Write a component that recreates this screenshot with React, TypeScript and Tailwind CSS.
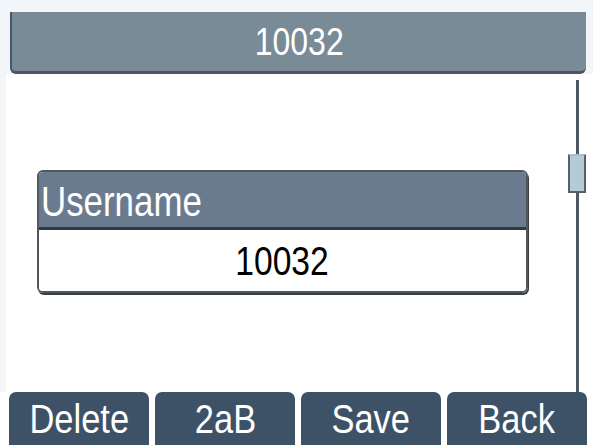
import React from "react";

const font = { fontFamily: '"Liberation Sans", Arial, sans-serif' };

function SoftKey({ label }: { label: string }) {
  return (
    <div className="flex h-full w-[140px] items-center justify-center rounded-t-[7px] bg-[#3d5267] pt-[2px] text-[41px] leading-none text-white">
      <span className="inline-block scale-x-[0.84]">{label}</span>
    </div>
  );
}

export default function App() {
  return (
    <div
      className="flex h-[445px] w-[593px] flex-col overflow-hidden bg-[#f3f6f9]"
      style={font}
    >
      {/* title bar */}
      <div className="ml-[10px] mt-[12px] flex h-[62px] w-[576px] items-center justify-center rounded-b-[6px] border-b-[3px] border-l-[2px] border-[#4a5561] bg-[#7a8b98] text-[39px] leading-none text-white">
        <span className="inline-block scale-x-[0.82]">10032</span>
      </div>

      {/* content */}
      <div className="ml-[6px] flex h-[318px] bg-white">
        <div className="flex-1">
          <div className="ml-[31px] mt-[96px] w-[491px] overflow-hidden rounded-[6px] border-[2px] border-[#50575e] shadow-[1px_2px_0_#3a3f44]">
            <div className="flex h-[58px] items-center border-b-[3px] border-[#2f3a45] bg-[#6a7b8f] pl-[2px] pt-[4px] text-[42px] leading-none text-white">
              <span className="inline-block origin-left scale-x-[0.83]">Username</span>
            </div>
            <div className="flex h-[61px] items-center justify-center bg-white pt-[2px] text-[41px] leading-none text-black">
              <span className="inline-block scale-x-[0.82]">10032</span>
            </div>
          </div>
        </div>

        {/* scroll bar */}
        <div className="mr-[7px] flex w-[18px] flex-col items-center pt-[6px]">
          <div className="h-[74px] w-[3px] bg-[#4d5863]" />
          <div className="h-[39px] w-[18px] border-[2px] border-[#55606a] border-t-[#a9bfcc] bg-[#b5c9d6]" />
          <div className="w-[3px] flex-1 bg-[#4d5863]" />
        </div>
      </div>

      {/* soft keys */}
      <div className="flex flex-1 gap-[6px] bg-white pl-[9px]">
        <SoftKey label="Delete" />
        <SoftKey label="2aB" />
        <SoftKey label="Save" />
        <SoftKey label="Back" />
      </div>
    </div>
  );
}
